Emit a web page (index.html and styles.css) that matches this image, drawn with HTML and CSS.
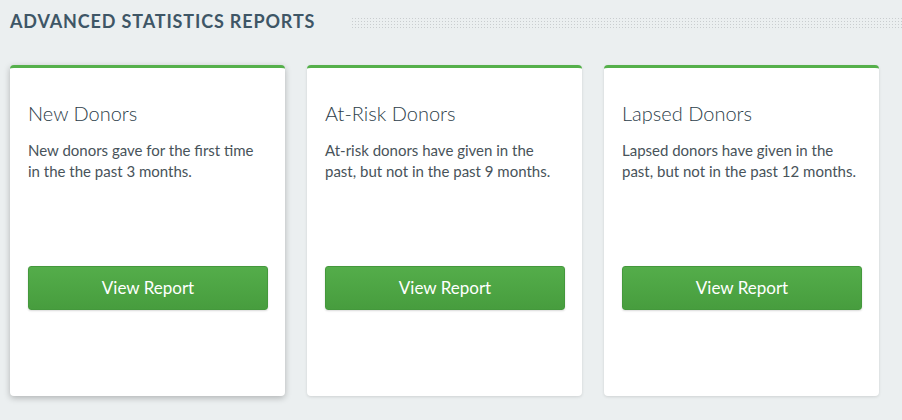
FILE: index.html
```html
<!DOCTYPE html>
<html>
<head>
<meta charset="utf-8">
<link rel="stylesheet" href="styles.css">
</head>
<body>
<div class="page">
  <div class="section-head">
    <h2 class="section-title">ADVANCED STATISTICS REPORTS</h2>
    <div class="dots"></div>
  </div>
  <div class="cards">
    <div class="card card-active">
      <h3 class="card-title">New Donors</h3>
      <p class="card-text">New donors gave for the first time in the the past 3 months.</p>
      <a class="btn">View Report</a>
    </div>
    <div class="card">
      <h3 class="card-title">At-Risk Donors</h3>
      <p class="card-text">At-risk donors have given in the past, but not in the past 9 months.</p>
      <a class="btn">View Report</a>
    </div>
    <div class="card">
      <h3 class="card-title">Lapsed Donors</h3>
      <p class="card-text">Lapsed donors have given in the past, but not in the past 12 months.</p>
      <a class="btn">View Report</a>
    </div>
  </div>
</div>
</body>
</html>
```
FILE: styles.css
```css
html, body {
  margin: 0;
  padding: 0;
  background: #ebeff0;
}
body {
  font-family: "Lato", "Open Sans", sans-serif;
  width: 902px;
  height: 420px;
  overflow: hidden;
}
.page {
  padding: 10px 0 0 10px;
}
.section-head {
  display: flex;
  align-items: center;
  height: 22px;
}
.section-title {
  margin: 0;
  font-size: 18px;
  font-weight: 700;
  letter-spacing: 0.85px;
  color: #3e5666;
  white-space: nowrap;
}
.dots {
  flex: 1;
  margin-left: 36px;
  height: 12px;
  margin-top: 3px;
  background-image: radial-gradient(circle, #c9cdcf 0.7px, transparent 1px);
  background-size: 3px 3px;
}
.cards {
  display: flex;
  gap: 22px;
  margin-top: 33px;
}
.card {
  width: 275px;
  height: 331px;
  box-sizing: border-box;
  background: #fff;
  border-top: 3px solid #55b04b;
  border-radius: 4px;
  box-shadow: 0 1px 3px rgba(0,0,0,0.12);
  padding: 32px 20px 0 18px;
}
.card-active {
  box-shadow: 0 2px 6px rgba(0,0,0,0.25);
}
.card-title {
  margin: 0;
  font-size: 20px;
  font-weight: 300;
  color: #2c3d49;
  line-height: 26px;
}
.card-text {
  margin: 14px 0 0 0;
  font-size: 15px;
  line-height: 21px;
  color: #48535a;
  height: 126px;
}
.btn {
  display: block;
  width: 240px;
  height: 44px;
  box-sizing: border-box;
  border-radius: 3px;
  background: linear-gradient(#54ad4a, #479d3e);
  border: 1px solid #44983c;
  box-shadow: 0 1px 2px rgba(0,0,0,0.15);
  color: #fff;
  font-size: 17px;
  line-height: 42px;
  text-align: center;
}
```
